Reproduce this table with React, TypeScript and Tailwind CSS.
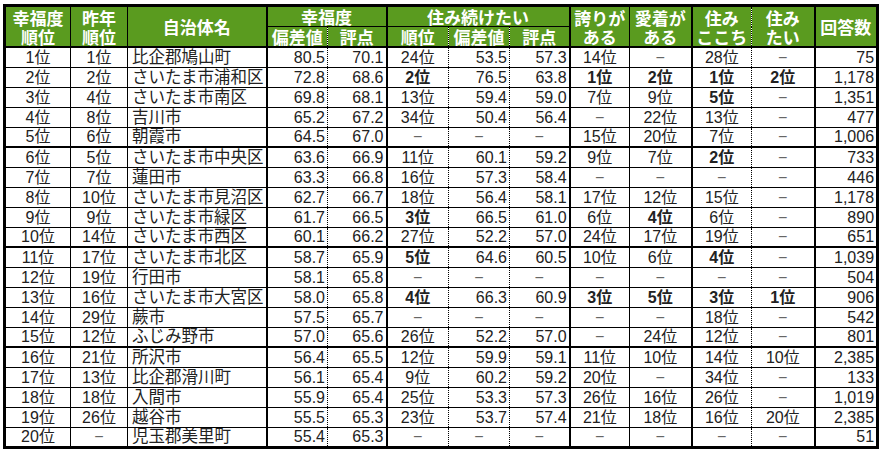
import React from "react";

type Row = string[];

const rows: Row[] = [
  ["1位", "1位", "比企郡鳩山町", "80.5", "70.1", "24位", "53.5", "57.3", "14位", "−", "28位", "−", "75"],
  ["2位", "2位", "さいたま市浦和区", "72.8", "68.6", "2位*", "76.5", "63.8", "1位*", "2位*", "1位*", "2位*", "1,178"],
  ["3位", "4位", "さいたま市南区", "69.8", "68.1", "13位", "59.4", "59.0", "7位", "9位", "5位*", "−", "1,351"],
  ["4位", "8位", "吉川市", "65.2", "67.2", "34位", "50.4", "56.4", "−", "22位", "13位", "−", "477"],
  ["5位", "6位", "朝霞市", "64.5", "67.0", "−", "−", "−", "15位", "20位", "7位", "−", "1,006"],
  ["6位", "5位", "さいたま市中央区", "63.6", "66.9", "11位", "60.1", "59.2", "9位", "7位", "2位*", "−", "733"],
  ["7位", "7位", "蓮田市", "63.3", "66.8", "16位", "57.3", "58.4", "−", "−", "−", "−", "446"],
  ["8位", "10位", "さいたま市見沼区", "62.7", "66.7", "18位", "56.4", "58.1", "17位", "12位", "15位", "−", "1,178"],
  ["9位", "9位", "さいたま市緑区", "61.7", "66.5", "3位*", "66.5", "61.0", "6位", "4位*", "6位", "−", "890"],
  ["10位", "14位", "さいたま市西区", "60.1", "66.2", "27位", "52.2", "57.0", "24位", "17位", "19位", "−", "651"],
  ["11位", "17位", "さいたま市北区", "58.7", "65.9", "5位*", "64.6", "60.5", "10位", "6位", "4位*", "−", "1,039"],
  ["12位", "19位", "行田市", "58.1", "65.8", "−", "−", "−", "−", "−", "−", "−", "504"],
  ["13位", "16位", "さいたま市大宮区", "58.0", "65.8", "4位*", "66.3", "60.9", "3位*", "5位*", "3位*", "1位*", "906"],
  ["14位", "29位", "蕨市", "57.5", "65.7", "−", "−", "−", "−", "−", "18位", "−", "542"],
  ["15位", "12位", "ふじみ野市", "57.0", "65.6", "26位", "52.2", "57.0", "−", "24位", "12位", "−", "801"],
  ["16位", "21位", "所沢市", "56.4", "65.5", "12位", "59.9", "59.1", "11位", "10位", "14位", "10位", "2,385"],
  ["17位", "13位", "比企郡滑川町", "56.1", "65.4", "9位", "60.2", "59.2", "20位", "−", "34位", "−", "133"],
  ["18位", "18位", "入間市", "55.9", "65.4", "25位", "53.3", "57.3", "26位", "16位", "26位", "−", "1,019"],
  ["19位", "26位", "越谷市", "55.5", "65.3", "23位", "53.7", "57.4", "21位", "18位", "16位", "20位", "2,385"],
  ["20位", "−", "児玉郡美里町", "55.4", "65.3", "−", "−", "−", "−", "−", "−", "−", "51"],
];

const widths = [
  "w-[66px]",
  "w-[57px]",
  "w-[139px]",
  "w-[61px]",
  "w-[59px]",
  "w-[62px]",
  "w-[61px]",
  "w-[60px]",
  "w-[60px]",
  "w-[62px]",
  "w-[60px]",
  "w-[63px]",
  "w-[63px]",
];

const rightBorder = [
  "border-r border-r-black",
  "border-r border-r-black",
  "border-r-2 border-r-black",
  "border-r border-r-black [border-right-style:dotted]!",
  "border-r-2 border-r-black",
  "border-r border-r-black [border-right-style:dotted]!",
  "border-r border-r-black [border-right-style:dotted]!",
  "border-r-2 border-r-black",
  "border-r border-r-black",
  "border-r-2 border-r-black",
  "border-r border-r-black [border-right-style:dotted]!",
  "border-r-2 border-r-black",
  "",
];

// alignment for data cells: c = center, l = left, r = right
const align = ["c", "c", "l", "r", "r", "c", "r", "r", "c", "c", "c", "c", "r"];

const thickAfter = new Set([4, 9, 14]);

function Cell({ value, col, rowIdx }: { value: string; col: number; rowIdx: number }) {
  const bold = value.endsWith("*");
  const text = bold ? value.slice(0, -1) : value;
  const isDash = text === "−";
  let al = align[col];
  if (isDash) al = "c";
  const alignCls = al === "c" ? "text-center" : al === "l" ? "text-left pl-[4px]" : "text-right pr-[2px]";
  const bottom = thickAfter.has(rowIdx) ? "border-b-2 border-b-black" : "border-b border-b-black";
  const size = col === 2 ? "text-[16.5px]" : "text-[16px]";
  return (
    <td
      className={`${rightBorder[col]} ${bottom} ${alignCls} ${size} ${bold ? "font-bold" : "font-normal"} ${isDash ? "text-[#666]" : "text-[#222]"} leading-[17px] p-0 whitespace-nowrap overflow-hidden`}
    >
      {text}
    </td>
  );
}

export default function App() {
  const headCls =
    "bg-[#5a9b1f] text-white font-bold text-[17px] leading-[19px] text-center p-0 whitespace-nowrap overflow-hidden";
  return (
    <div className="w-[888px] h-[456px] bg-white pl-[3px] pt-[4px] font-['Liberation_Sans','Noto_Sans_CJK_JP',sans-serif]">
      <table className="table-fixed border-collapse border-[3px] border-black w-[873px]">
        <colgroup>
          {widths.map((w, i) => (
            <col key={i} className={w} />
          ))}
        </colgroup>
        <thead className="font-['Noto_Sans_CJK_JP',sans-serif]">
          <tr className="h-[20px]">
            <th rowSpan={2} className={`${headCls} border-r border-r-black border-b-2 border-b-black`}>
              幸福度
              <br />
              順位
            </th>
            <th rowSpan={2} className={`${headCls} border-r border-r-black border-b-2 border-b-black`}>
              昨年
              <br />
              順位
            </th>
            <th rowSpan={2} className={`${headCls} border-r-2 border-r-black border-b-2 border-b-black`}>
              自治体名
            </th>
            <th colSpan={2} className={`${headCls} border-r-2 border-r-black border-b border-b-black`}>
              幸福度
            </th>
            <th colSpan={3} className={`${headCls} border-r-2 border-r-black border-b border-b-black`}>
              住み続けたい
            </th>
            <th rowSpan={2} className={`${headCls} border-r border-r-black border-b-2 border-b-black`}>
              誇りが
              <br />
              ある
            </th>
            <th rowSpan={2} className={`${headCls} border-r-2 border-r-black border-b-2 border-b-black`}>
              愛着が
              <br />
              ある
            </th>
            <th
              rowSpan={2}
              className={`${headCls} border-r border-r-black [border-right-style:dotted]! border-b-2 border-b-black`}
            >
              住み
              <br />
              ここち
            </th>
            <th rowSpan={2} className={`${headCls} border-r-2 border-r-black border-b-2 border-b-black`}>
              住み
              <br />
              たい
            </th>
            <th rowSpan={2} className={`${headCls} border-b-2 border-b-black`}>
              回答数
            </th>
          </tr>
          <tr className="h-[18px]">
            <th className={`${headCls} border-r border-r-black [border-right-style:dotted]! border-b-2 border-b-black`}>
              偏差値
            </th>
            <th className={`${headCls} border-r-2 border-r-black border-b-2 border-b-black`}>評点</th>
            <th className={`${headCls} border-r border-r-black [border-right-style:dotted]! border-b-2 border-b-black`}>
              順位
            </th>
            <th className={`${headCls} border-r border-r-black [border-right-style:dotted]! border-b-2 border-b-black`}>
              偏差値
            </th>
            <th className={`${headCls} border-r-2 border-r-black border-b-2 border-b-black`}>評点</th>
          </tr>
        </thead>
        <tbody>
          {rows.map((r, ri) => (
            <tr key={ri} className="h-[20px] bg-white">
              {r.map((v, ci) => (
                <Cell key={ci} value={v} col={ci} rowIdx={ri} />
              ))}
            </tr>
          ))}
        </tbody>
      </table>
    </div>
  );
}
